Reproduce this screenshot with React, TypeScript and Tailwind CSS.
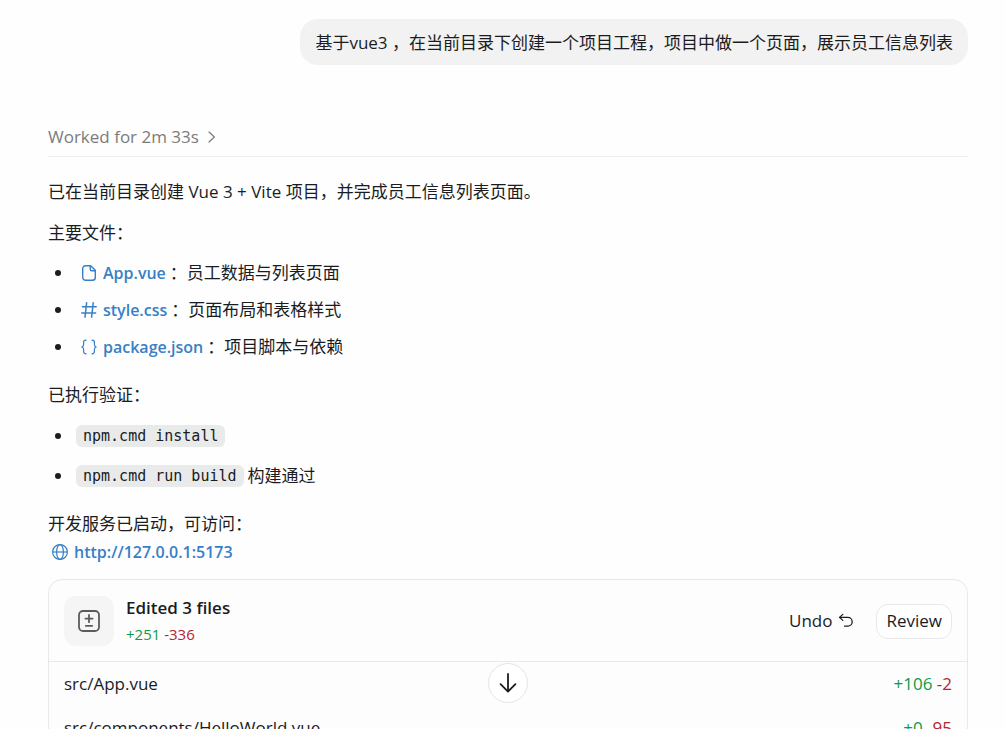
import { FC, ReactNode } from "react";

interface IFileChange {
  path: string;
  added: number;
  removed: number;
}

const changes: IFileChange[] = [
  { path: "src/App.vue", added: 106, removed: 2 },
  { path: "src/components/HelloWorld.vue", added: 0, removed: 95 },
];

const FileIcon = () => (
  <svg width="16" height="18" viewBox="0 0 16 18" fill="none" stroke="currentColor" strokeWidth="1.4" strokeLinejoin="round">
    <path d="M4.5 1.7h5.2l4.6 4.6v7.2a2.8 2.8 0 0 1-2.8 2.8h-7a2.8 2.8 0 0 1-2.8-2.8v-9a2.8 2.8 0 0 1 2.8-2.8Z" />
    <path d="M9.2 1.9v3.3a1.5 1.5 0 0 0 1.5 1.5h3.4" />
  </svg>
);

const HashIcon = () => (
  <svg width="16" height="18" viewBox="0 0 16 18" fill="none" stroke="currentColor" strokeWidth="1.5" strokeLinecap="round">
    <path d="M5.6 1.8 4 16.2M12.2 1.8l-1.6 14.4M1.4 5.8h13.8M.8 12h13.8" />
  </svg>
);

const BracesIcon = () => (
  <svg width="16" height="18" viewBox="0 0 16 18" fill="none" stroke="currentColor" strokeWidth="1.2" strokeLinecap="round" strokeLinejoin="round">
    <path d="M5 2.2c-1.8 0-2.4.8-2.4 2.2v2.2C2.6 8 2 8.7.8 9c1.2.3 1.8 1 1.8 2.4v2.2c0 1.4.6 2.2 2.4 2.2" />
    <path d="M11 2.2c1.8 0 2.4.8 2.4 2.2v2.2c0 1.4.6 2.1 1.8 2.4-1.2.3-1.8 1-1.8 2.4v2.2c0 1.4-.6 2.2-2.4 2.2" />
  </svg>
);

const GlobeIcon = () => (
  <svg width="18" height="18" viewBox="0 0 18 18" fill="none" stroke="currentColor" strokeWidth="1.2">
    <circle cx="9" cy="9" r="7.4" />
    <ellipse cx="9" cy="9" rx="3.4" ry="7.4" />
    <path d="M1.6 9h14.8" />
  </svg>
);

const DiffIcon = () => (
  <svg width="24" height="24" viewBox="0 0 24 24" fill="none" stroke="currentColor" strokeWidth="1.8" strokeLinecap="round">
    <rect x="2" y="2" width="20" height="20" rx="4" />
    <path d="M12 6v7.2M8.4 9.6h7.2M8.8 16.8h6.4" />
  </svg>
);

const UndoIcon = () => (
  <svg width="16" height="16" viewBox="0 0 16 16" fill="none" stroke="currentColor" strokeWidth="1.3" strokeLinecap="round" strokeLinejoin="round">
    <path d="M4.8 1.4 1.6 4.4l3.2 3" />
    <path d="M1.6 4.4h8.2a4.4 4.4 0 0 1 0 8.8H6.6" />
  </svg>
);

const ArrowDownIcon = () => (
  <svg width="20" height="22" viewBox="0 0 20 22" fill="none" stroke="currentColor" strokeWidth="1.8" strokeLinecap="round" strokeLinejoin="round">
    <path d="M10 2v17.4M2.6 12.2l7.4 7.4 7.4-7.4" />
  </svg>
);

const DiffCount: FC<{ added: number; removed: number }> = ({ added, removed }) => (
  <span className="whitespace-nowrap">
    <span className="text-[#0f9a43]">+{added}</span>{" "}
    <span className="text-[#b3262b]">-{removed}</span>
  </span>
);

const ListItem: FC<{ children: ReactNode }> = ({ children }) => (
  <li className="flex h-7 items-center">
    <span className="ml-[7px] mr-[15px] size-[6px] rounded-full bg-[#1a1c1f]" />
    {children}
  </li>
);

const FileLink: FC<{ icon: ReactNode; name: string; note: string }> = ({
  icon,
  name,
  note,
}) => (
  <ListItem>
    <a href="#" className="ml-[5px] mr-1 flex items-center gap-[6px] text-base font-semibold text-[#3780c6]">
      {icon}
      {name}
    </a>
    ：{note}
  </ListItem>
);

const Code: FC<{ children: ReactNode }> = ({ children }) => (
  <code className="rounded-md bg-[#e9eaea] px-[7px] font-['DejaVu_Sans_Mono','Liberation_Mono',monospace] text-[15px] leading-[22px]">
    {children}
  </code>
);

const ChangesCard = () => (
  <section className="mt-[13px] rounded-[14px] border border-[#e9e9e9] bg-[#fdfdfd]">
    <header className="flex items-center border-b border-[#e9e9e9] px-[15px] pb-[14px] pt-[15px]">
      <div className="flex size-[50px] items-center justify-center rounded-xl bg-[#f5f5f5] text-[#5c5c5c]">
        <DiffIcon />
      </div>
      <div className="ml-3 flex-1">
        <h2 className="font-semibold leading-[26px]">Edited 3 files</h2>
        <p className="text-[15px] leading-[26px]">
          <DiffCount added={251} removed={336} />
        </p>
      </div>
      <button className="flex items-center gap-[6px]">
        Undo
        <UndoIcon />
      </button>
      <button className="ml-[22px] h-[35px] rounded-xl border border-[#e9e9e9] bg-white px-[9px]">
        Review
      </button>
    </header>
    <ul>
      {changes.map((change) => (
        <li key={change.path} className="flex h-11 items-center justify-between px-[15px]">
          <span>{change.path}</span>
          <DiffCount added={change.added} removed={change.removed} />
        </li>
      ))}
    </ul>
  </section>
);

const App = () => {
  return (
    <main className="h-screen overflow-hidden bg-[#fefefe] pl-12 pr-[37px] font-['Open_Sans','Noto_Sans_CJK_SC',sans-serif] text-[17px] leading-7 text-[#1a1c1f]">
      <div className="relative h-full">
        <div className="h-full overflow-hidden">
          <div className="mt-[19px] flex justify-end">
            <p className="rounded-[18px] bg-[#f2f2f2] px-[15px] pb-2 pt-[10px]">
              基于vue3 ，在当前目录下创建一个项目工程，项目中做一个页面，展示员工信息列表
            </p>
          </div>

          <div className="mt-[52px] border-b border-[#efefef]">
            <button className="flex h-[39px] items-center gap-2 text-[#7b7b7b]">
              Worked for 2m 33s
              <svg width="10" height="14" viewBox="0 0 10 14" fill="none" stroke="currentColor" strokeWidth="1.2" strokeLinecap="round" strokeLinejoin="round">
                <path d="M2 2 7.4 7 2 12" />
              </svg>
            </button>
          </div>

          <p className="mt-[21px]">已在当前目录创建 Vue 3 + Vite 项目，并完成员工信息列表页面。</p>
          <p className="mt-[13px]">主要文件：</p>
          <ul className="mt-3 flex flex-col gap-[9px]">
            <FileLink icon={<FileIcon />} name="App.vue" note="员工数据与列表页面" />
            <FileLink icon={<HashIcon />} name="style.css" note="页面布局和表格样式" />
            <FileLink icon={<BracesIcon />} name="package.json" note="项目脚本与依赖" />
          </ul>

          <p className="mt-5">已执行验证：</p>
          <ul className="mt-[13px] flex flex-col gap-3">
            <ListItem>
              <Code>npm.cmd install</Code>
            </ListItem>
            <ListItem>
              <Code>npm.cmd run build</Code>
              <span className="ml-1">构建通过</span>
            </ListItem>
          </ul>

          <p className="mt-5">开发服务已启动，可访问：</p>
          <a href="http://127.0.0.1:5173" className="ml-[3px] flex w-fit items-center gap-[5px] text-base leading-7 font-semibold text-[#3780c6]">
            <GlobeIcon />
            http://127.0.0.1:5173
          </a>

          <ChangesCard />
        </div>

        <button
          aria-label="Scroll to bottom"
          className="absolute bottom-[26px] left-1/2 flex size-10 -translate-x-1/2 items-center justify-center rounded-full border border-[#e5e5e5] bg-white"
        >
          <ArrowDownIcon />
        </button>
      </div>
    </main>
  );
};

export default App;
